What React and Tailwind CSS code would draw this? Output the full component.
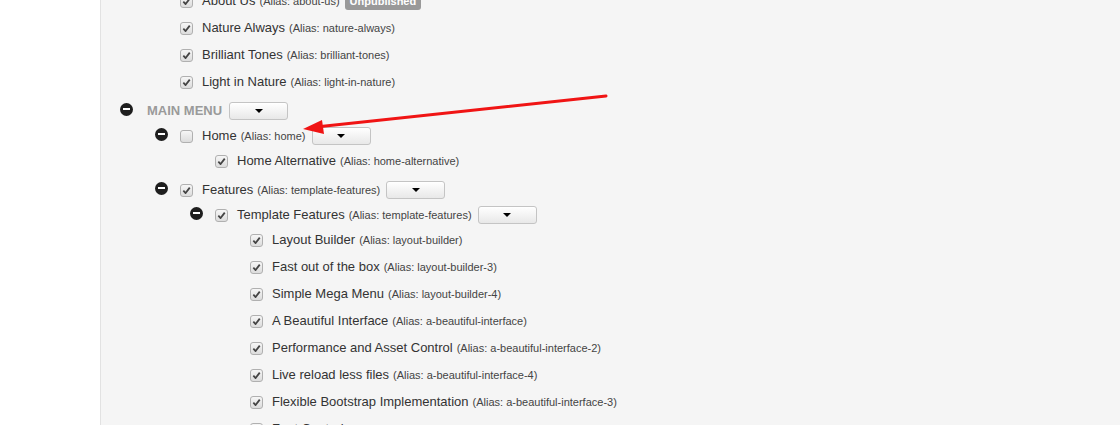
import React from "react";

const rows = [
  { lvl: 1, label: "About Us", alias: "about-us", checked: true, badge: "Unpublished", mt: "mt-[-9px]" },
  { lvl: 1, label: "Nature Always", alias: "nature-always", checked: true, mt: "mt-[7px]" },
  { lvl: 1, label: "Brilliant Tones", alias: "brilliant-tones", checked: true, mt: "mt-[7px]" },
  { lvl: 1, label: "Light in Nature", alias: "light-in-nature", checked: true, mt: "mt-[7px]" },
  { lvl: 0, menu: true, toggle: true, label: "MAIN MENU", dropdown: true, mt: "mt-[9px]" },
  { lvl: 1, toggle: true, label: "Home", alias: "home", checked: false, dropdown: true, mt: "mt-[5px]" },
  { lvl: 2, label: "Home Alternative", alias: "home-alternative", checked: true, mt: "mt-[5px]" },
  { lvl: 1, toggle: true, label: "Features", alias: "template-features", checked: true, dropdown: true, mt: "mt-[9px]" },
  { lvl: 2, toggle: true, label: "Template Features", alias: "template-features", checked: true, dropdown: true, mt: "mt-[5px]" },
  { lvl: 3, label: "Layout Builder", alias: "layout-builder", checked: true, mt: "mt-[5px]" },
  { lvl: 3, label: "Fast out of the box", alias: "layout-builder-3", checked: true, mt: "mt-[7px]" },
  { lvl: 3, label: "Simple Mega Menu", alias: "layout-builder-4", checked: true, mt: "mt-[7px]" },
  { lvl: 3, label: "A Beautiful Interface", alias: "a-beautiful-interface", checked: true, mt: "mt-[7px]" },
  { lvl: 3, label: "Performance and Asset Control", alias: "a-beautiful-interface-2", checked: true, mt: "mt-[7px]" },
  { lvl: 3, label: "Live reload less files", alias: "a-beautiful-interface-4", checked: true, mt: "mt-[7px]" },
  { lvl: 3, label: "Flexible Bootstrap Implementation", alias: "a-beautiful-interface-3", checked: true, mt: "mt-[7px]" },
  { lvl: 3, label: "Font Control", alias: "font-control", checked: true, mt: "mt-[7px]" },
];

const indent = {
  0: "pl-[19px]",
  1: "pl-[54px]",
  2: "pl-[89px]",
  3: "pl-[124px]",
};

function Checkbox({ checked }) {
  return (
    <span className="flex items-center justify-center w-[13px] h-[13px] shrink-0 rounded-[3px] border border-[#b0b0b0] bg-gradient-to-b from-[#f6f6f6] to-[#dcdcdc]">
      {checked && (
        <svg width="9" height="9" viewBox="0 0 10 10">
          <path d="M1.5 5.2 L4 7.8 L8.6 1.8" fill="none" stroke="#444" strokeWidth="2" strokeLinejoin="round" />
        </svg>
      )}
    </span>
  );
}

function Minus() {
  return (
    <span className="flex items-center justify-center w-[13px] h-[13px] rounded-full bg-[#1e1e1e] mb-[4px]">
      <span className="w-[7px] h-[2px] bg-white" />
    </span>
  );
}

function Caret() {
  return (
    <button className="flex items-center justify-center w-[59px] h-[18px] rounded-[3px] border border-[#c4c4c4] bg-gradient-to-b from-white to-[#e8e8e8] shadow-[inset_0_1px_0_rgba(255,255,255,0.6)]">
      <span className="w-0 h-0 border-l-[4px] border-r-[4px] border-t-[4px] border-l-transparent border-r-transparent border-t-black" />
    </button>
  );
}

function Row({ row }) {
  return (
    <div className={`flex items-center h-[20px] ${indent[row.lvl]} ${row.mt}`}>
      <span className={`shrink-0 ${row.menu ? "w-[27px]" : "w-[25px]"}`}>
        {row.toggle && <Minus />}
      </span>
      {row.menu ? (
        <span className="text-[13px] font-bold text-[#9a9a9a] mr-[7px]">{row.label}</span>
      ) : (
        <>
          <Checkbox checked={row.checked} />
          <span className="ml-[9px] text-[13px] text-[#333]">{row.label}</span>
          <span className="ml-[4px] text-[11px] text-[#444] mt-[1px]">(Alias: {row.alias})</span>
          {row.badge && (
            <span className="ml-[5px] px-[5px] py-[1px] rounded-[3px] bg-[#999] text-white text-[11px] font-bold">
              {row.badge}
            </span>
          )}
          {row.dropdown && <span className="w-[6px]" />}
        </>
      )}
      {row.dropdown && <Caret />}
    </div>
  );
}

export default function App() {
  return (
    <div className="flex h-[425px] w-[1120px] overflow-hidden bg-white font-['Liberation_Sans',Arial,sans-serif]">
      <div className="w-[101px] shrink-0 bg-white border-r border-[#e2e2e2]" />
      <div className="relative flex-1 bg-[#f5f5f5]">
        <div className="flex flex-col">
          {rows.map((row, i) => (
            <Row key={i} row={row} />
          ))}
        </div>
        {/* red annotation arrow */}
        <svg className="absolute left-0 top-0 pointer-events-none" width="1018" height="425">
          <line x1="505" y1="96" x2="215" y2="127" stroke="#f01414" strokeWidth="3" strokeLinecap="round" />
          <polygon points="202,129 221,120 223,134" fill="#f01414" />
        </svg>
      </div>
    </div>
  );
}
